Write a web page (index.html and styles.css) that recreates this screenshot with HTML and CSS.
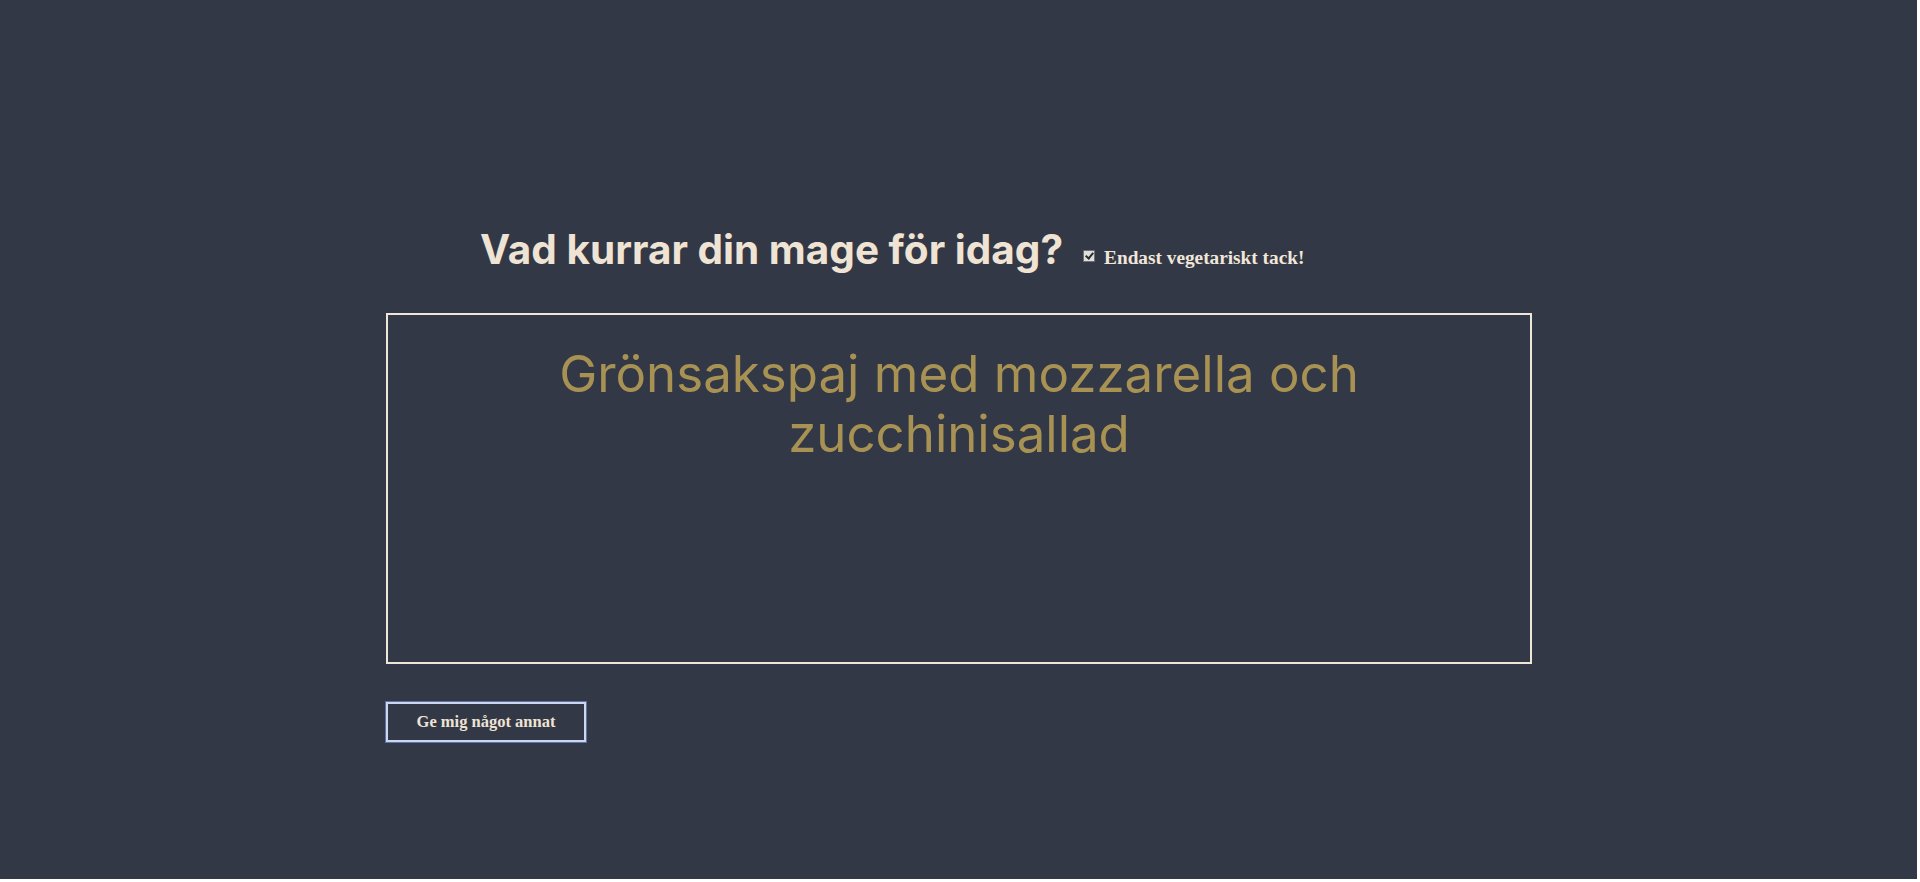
FILE: index.html
```html
<!DOCTYPE html>
<html lang="sv">
<head>
<meta charset="utf-8">
<title>Vad kurrar din mage för idag?</title>
<link rel="stylesheet" href="styles.css">
</head>
<body>
<div class="page">
  <div class="container">
    <div class="header">
      <h1 class="title">Vad kurrar din mage för idag?</h1>
      <label class="veg"><input type="checkbox" class="veg-check" checked><span class="veg-text">Endast vegetariskt tack!</span></label>
    </div>
    <div class="dish-box">
      <p class="dish">Grönsakspaj med mozzarella och zucchinisallad</p>
    </div>
    <button class="other-btn" type="button">Ge mig något annat</button>
  </div>
</div>
</body>
</html>
```
FILE: styles.css
```css
html {
  background: #ffffff;
}
body {
  margin: 0;
  background: #ffffff;
}
.page {
  width: 1917px;
  height: 879px;
  background: #333847;
  padding-top: 226px;
  box-sizing: border-box;
}
.container {
  width: 1146px;
  margin-left: 386px;
  display: flex;
  flex-direction: column;
  align-items: flex-start;
}
.header {
  display: flex;
  align-items: baseline;
  padding-left: 94px;
  height: 48px;
}
.title {
  margin: 0;
  font-family: "Inter", "Liberation Sans", sans-serif;
  font-weight: 700;
  font-size: 40.5px;
  line-height: 48px;
  color: #efe3d3;
}
.veg {
  display: block;
  margin-left: 20px;
  font-family: "Liberation Serif", serif;
  font-weight: 700;
  font-size: 19.3px;
  color: #f1e7d9;
}
.veg-check {
  appearance: none;
  -webkit-appearance: none;
  display: inline-block;
  vertical-align: baseline;
  width: 12px;
  height: 12px;
  margin: 0 9px 2px 0;
  border: 1px solid #707070;
  border-radius: 1px;
  background: #dedede;
  box-sizing: border-box;
  position: relative;
}
.veg-check:checked::after {
  content: "";
  position: absolute;
  left: 3px;
  top: 0px;
  width: 3px;
  height: 6px;
  border: solid #2b2b2b;
  border-width: 0 2px 2px 0;
  transform: rotate(40deg);
}
.dish-box {
  margin-top: 39px;
  width: 1146px;
  height: 351px;
  border: 2px solid #efe6da;
  box-sizing: border-box;
  padding-top: 29px;
  display: flex;
  justify-content: center;
}
.dish {
  margin: 0;
  width: 840px;
  text-align: center;
  font-family: "Inter", "Liberation Sans", sans-serif;
  font-weight: 400;
  font-size: 51px;
  line-height: 60px;
  color: #a89253;
}
.other-btn {
  margin-top: 38px;
  width: 200px;
  height: 40px;
  background: #333847;
  border: 2px solid #cdd6f1;
  box-shadow: 0 0 0 1px #5f73a6;
  color: #efe3d3;
  font-family: "Liberation Serif", serif;
  font-weight: 700;
  font-size: 16.5px;
  padding: 0;
  cursor: pointer;
}
```
